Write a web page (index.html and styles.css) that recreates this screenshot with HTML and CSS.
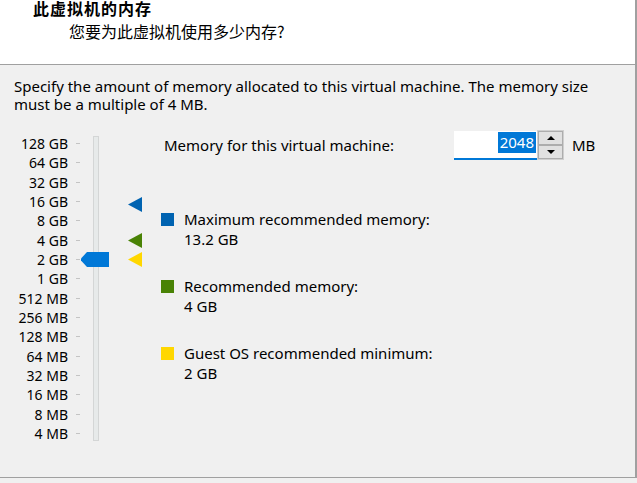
FILE: index.html
```html
<!DOCTYPE html>
<html lang="zh-CN">
<head>
<meta charset="utf-8">
<title>此虚拟机的内存</title>
<link rel="stylesheet" href="styles.css">
</head>
<body>
<div class="window">
  <header class="header">
    <h1 class="title">此虚拟机的内存</h1>
    <p class="subtitle">您要为此虚拟机使用多少内存?</p>
  </header>
  <section class="content">
    <p class="intro">Specify the amount of memory allocated to this virtual machine. The memory size must be a multiple of 4 MB.</p>
    <div class="main">
      <div class="scale">
        <span class="lbl">128 GB</span><span class="tick"></span>
        <span class="lbl">64 GB</span><span class="tick"></span>
        <span class="lbl">32 GB</span><span class="tick"></span>
        <span class="lbl">16 GB</span><span class="tick"></span>
        <span class="lbl">8 GB</span><span class="tick"></span>
        <span class="lbl">4 GB</span><span class="tick"></span>
        <span class="lbl">2 GB</span><span class="tick"></span>
        <span class="lbl">1 GB</span><span class="tick"></span>
        <span class="lbl">512 MB</span><span class="tick"></span>
        <span class="lbl">256 MB</span><span class="tick"></span>
        <span class="lbl">128 MB</span><span class="tick"></span>
        <span class="lbl">64 MB</span><span class="tick"></span>
        <span class="lbl">32 MB</span><span class="tick"></span>
        <span class="lbl">16 MB</span><span class="tick"></span>
        <span class="lbl">8 MB</span><span class="tick"></span>
        <span class="lbl">4 MB</span><span class="tick"></span>
        <div class="track"></div>
        <svg class="thumb" width="28" height="15" viewBox="0 0 28 15"><path d="M0 6.5 L6 0 H28 V15 H6 L0 8.5 Z" fill="#0078d7"/></svg>
        <svg class="marker marker-max" width="14" height="15" viewBox="0 0 14 15"><path d="M0 7.5 L14 0 V15 Z" fill="#0063b1"/></svg>
        <svg class="marker marker-rec" width="14" height="15" viewBox="0 0 14 15"><path d="M0 7.5 L14 0 V15 Z" fill="#498205"/></svg>
        <svg class="marker marker-min" width="14" height="15" viewBox="0 0 14 15"><path d="M0 7.5 L14 0 V15 Z" fill="#ffd700"/></svg>
      </div>
      <div class="panel">
        <div class="mem-row">
          <span class="mem-label">Memory for this virtual machine:</span>
          <div class="field"><span class="sel">2048</span></div>
          <div class="spin">
            <span class="spin-btn"><span class="arrow-up"></span></span>
            <span class="spin-btn"><span class="arrow-down"></span></span>
          </div>
          <span class="unit">MB</span>
        </div>
        <div class="legend">
          <div class="item">
            <span class="swatch swatch-max"></span>
            <div class="item-text">Maximum recommended memory:<br>13.2 GB</div>
          </div>
          <div class="item">
            <span class="swatch swatch-rec"></span>
            <div class="item-text">Recommended memory:<br>4 GB</div>
          </div>
          <div class="item">
            <span class="swatch swatch-min"></span>
            <div class="item-text">Guest OS recommended minimum:<br>2 GB</div>
          </div>
        </div>
      </div>
    </div>
  </section>
</div>
</body>
</html>
```
FILE: styles.css
```css
* { box-sizing: border-box; }
html, body { margin: 0; padding: 0; }
body {
  background: #f0f0f0;
  font-family: "Noto Sans", "Liberation Sans", sans-serif;
  font-size: 15px;
  color: #000;
  width: 637px;
  height: 483px;
  overflow: hidden;
}
.window {
  width: 637px;
  height: 478px;
  border-right: 2px solid #a0a0a0;
  border-bottom: 1px solid #a0a0a0;
}
.header {
  background: #fff;
  height: 65px;
  border-bottom: 1px solid #a0a0a0;
  padding: 0;
  overflow: hidden;
}
.title {
  margin: 0 0 0 33px;
  font-family: "Noto Sans CJK SC", sans-serif;
  font-size: 16px;
  line-height: 16px;
  font-weight: 700;
  letter-spacing: 1px;
}
.subtitle {
  margin: 7px 0 0 69px;
  font-family: "Noto Sans CJK SC", sans-serif;
  font-size: 16px;
  line-height: 16px;
  letter-spacing: 0;
}
.content {
  height: 412px;
}
.intro {
  margin: 0;
  padding: 12px 0 0 14px;
  width: 620px;
  line-height: 18px;
}
.main {
  display: flex;
  margin-top: 17px;
}
.scale {
  display: grid;
  grid-template-columns: 68px 8px 4px 1px 12px 6px 10px 19px 14px;
  grid-template-rows: repeat(16, 19.333px);
  padding-top: 4px;
  width: 142px;
}
.lbl {
  grid-column: 1;
  text-align: right;
  font-size: 14px;
  line-height: 19.333px;
  white-space: nowrap;
}
.tick {
  grid-column: 3;
  align-self: center;
  height: 1px;
  background: #c4c4c4;
}
.track {
  grid-column: 6;
  grid-row: 1 / -1;
  margin: 2px 0;
  background: #e7eaea;
  border: 1px solid #d4d6d6;
}
.thumb {
  grid-column: 5 / 8;
  grid-row: 7;
  align-self: center;
  display: block;
}
.marker {
  grid-column: 9;
  align-self: center;
  display: block;
}
.marker-max { grid-row: 4; transform: translateY(3px); }
.marker-rec { grid-row: 6; }
.marker-min { grid-row: 7; }
.panel {
  flex: 1;
  padding-left: 19px;
}
.mem-row {
  display: flex;
  align-items: center;
  height: 30px;
}
.mem-label {
  width: 290px;
  margin-left: 3px;
  white-space: nowrap;
}
.field {
  width: 83px;
  height: 29px;
  align-self: flex-end;
  background: #fff;
  border-bottom: 2px solid #0078d7;
  display: flex;
  justify-content: flex-end;
  align-items: flex-start;
  padding: 1px 1px 0 0;
}
.sel {
  background: #0078d7;
  color: #fff;
  height: 21px;
  line-height: 21px;
  padding: 0 2px;
}
.spin {
  width: 27px;
  height: 30px;
  border: 1px solid #cfcfcf;
  display: flex;
  flex-direction: column;
}
.spin-btn {
  flex: 1;
  background: #e1e1e1;
  border: 1px solid #adadad;
  display: flex;
  align-items: center;
  justify-content: center;
}
.arrow-up, .arrow-down {
  width: 0;
  height: 0;
  border-left: 4px solid transparent;
  border-right: 4px solid transparent;
}
.arrow-up { border-bottom: 4px solid #000; }
.arrow-down { border-top: 4px solid #000; }
.unit {
  margin-left: 8px;
}
.legend {
  margin-top: 49px;
  display: flex;
  flex-direction: column;
  gap: 27px;
}
.item {
  display: flex;
  gap: 10px;
  align-items: flex-start;
}
.swatch {
  width: 13px;
  height: 13px;
  margin-top: 4px;
  flex: none;
}
.swatch-max { background: #0063b1; }
.swatch-rec { background: #498205; }
.swatch-min { background: #ffd700; }
.item-text {
  line-height: 20px;
}
```
